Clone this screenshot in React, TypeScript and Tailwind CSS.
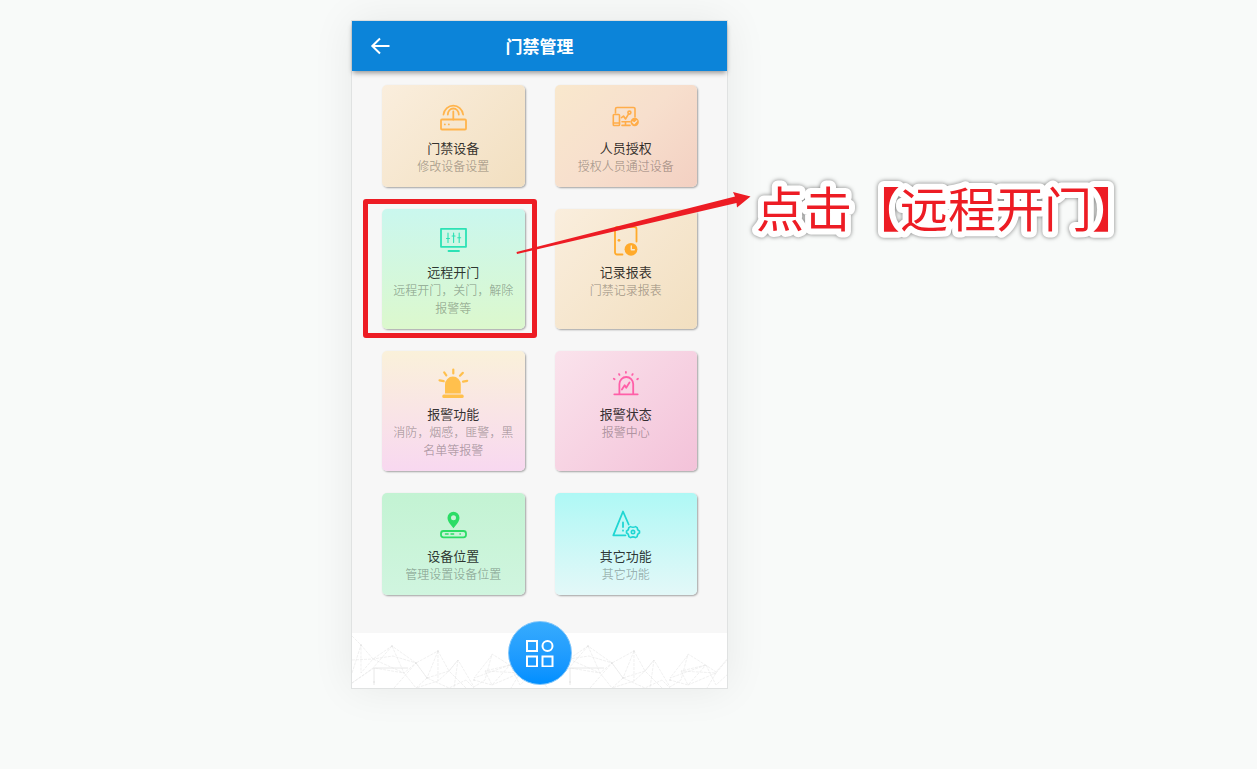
import type { ReactNode } from "react";

type MenuItem = {
  title: string;
  desc: string;
  bg: string;
  color: string;
  icon: ReactNode;
};

const menu: MenuItem[] = [
  {
    title: "门禁设备",
    desc: "修改设备设置",
    bg: "bg-linear-135 from-[#faeedd] to-[#f2dfc0]",
    color: "text-[#ffb44c]",
    icon: (
      <>
        <rect x="4" y="18.5" width="25" height="10" rx="1" />
        <path d="M16.3 10.5v8M6.5 13.5a9.9 10.3 0 0 1 19.6 0M10.8 13.5a5.5 6 0 0 1 11 0" />
        <path d="M7.8 23.4h.1M11.8 23.4h.1" />
      </>
    ),
  },
  {
    title: "人员授权",
    desc: "授权人员通过设备",
    bg: "bg-linear-135 from-[#f9e8cd] via-[#f7dfcd] to-[#f3d0c2]",
    color: "text-[#ffad4a]",
    icon: (
      <g strokeWidth="1.6">
        <path d="M5.5 12V8A1.5 1.5 0 0 1 7 6.500h16.500A1.500 1.500 0 0 1 25 8v8" />
        <rect x="3.3" y="13.5" width="6.2" height="11" rx="0.8" />
        <path d="M3.5 22h6M12 20.700h8M12 24.400h8M15.500 20.700v3.500" />
        <path d="M11.500 16.600l2-1.600 2 3 3-4.800" />
        <circle cx="19.4" cy="11.6" r="1.5" />
        <circle cx="24.7" cy="21" r="4.200" fill="currentColor" stroke="none" />
        <path d="M22.700 21l1.500 1.500 2.500-2.700" stroke="#fbe6d4" strokeWidth="1.2" />
      </g>
    ),
  },
  {
    title: "远程开门",
    desc: "远程开门，关门，解除报警等",
    bg: "bg-linear-to-b from-[#caf7ee] to-[#dcf8cd]",
    color: "text-[#2ce2b5]",
    icon: (
      <>
        <rect x="4" y="3.8" width="25" height="18" />
        <path d="M11.5 26h10.5" />
        <path
          d="M11 8v9.5M16.6 8v9.5M22.2 8v9.5M9.5 13.5h3M15.1 11h3M20.7 12.8h3"
          strokeWidth="1.1"
        />
      </>
    ),
  },
  {
    title: "记录报表",
    desc: "门禁记录报表",
    bg: "bg-linear-135 from-[#faeedd] to-[#f2dfc0]",
    color: "text-[#ffaa2b]",
    icon: (
      <>
        <path d="M12.500 29.500H7a2 2 0 0 1-2-2V4a2 2 0 0 1 2-2h17.500a2 2 0 0 1 2 2v12.500" />
        <circle cx="9" cy="15.3" r="1.4" fill="currentColor" stroke="none" />
        <circle cx="21" cy="24.3" r="6.4" fill="currentColor" stroke="none" />
        <path d="M21.3 21v3.7h3" stroke="#f7e8d0" strokeWidth="1.4" />
      </>
    ),
  },
  {
    title: "报警功能",
    desc: "消防，烟感，匪警，黑名单等报警",
    bg: "bg-linear-to-b from-[#faf1da] to-[#f8d8f0]",
    color: "text-[#ffc04d]",
    icon: (
      <>
        <path d="M8 26.5V17.500a7.900 7.900 0 0 1 15.800 0v9z" fill="currentColor" stroke="none" />
        <rect
          x="5.3"
          y="27.5"
          width="21.4"
          height="3.6"
          rx="1.5"
          fill="currentColor"
          stroke="none"
        />
        <path
          d="M16.300 2.500v4M7.200 5.400l2.100 2.900M25.800 5.900L23 8.700M2.500 13.300l4.200.9M30.200 13.800l-4.200.8"
          strokeWidth="2.2"
        />
      </>
    ),
  },
  {
    title: "报警状态",
    desc: "报警中心",
    bg: "bg-linear-135 from-[#fae3ec] to-[#f3c2d9]",
    color: "text-[#ff5fa8]",
    icon: (
      <>
        <path d="M9.400 27V17a6.900 7 0 0 1 13.800 0v10M4.300 27.300h23.400" />
        <path d="M11.900 22.600l2.800-4.400 1.500 2.500 3.300-5.300" />
        <path d="M15.900 5v.8M9 7.100l.5.800M22.700 7.100l-.5.800M3.800 11.800l.8.500M28 11.800l-.8.500" />
      </>
    ),
  },
  {
    title: "设备位置",
    desc: "管理设置设备位置",
    bg: "bg-linear-to-b from-[#c3f3d3] to-[#d0f5df]",
    color: "text-[#2bdd66]",
    icon: (
      <>
        <path
          d="M16.500 2.800a6 6 0 0 0-6 6c0 4 3.500 7 6 10.400 2.500-3.400 6-6.400 6-10.400a6 6 0 0 0-6-6zm0 3.500a2.500 2.500 0 1 1 0 5 2.500 2.500 0 0 1 0-5z"
          fill="currentColor"
          fillRule="evenodd"
          stroke="none"
        />
        <rect x="4" y="22" width="25" height="6.3" rx="2.5" />
        <path d="M8.500 25.100h2.600M14 25.100h2.600M23 25.100h.3" strokeWidth="1.5" />
      </>
    ),
  },
  {
    title: "其它功能",
    desc: "其它功能",
    bg: "bg-linear-to-b from-[#aef8f5] to-[#e3f8f8]",
    color: "text-[#1fd6d3]",
    icon: (
      <>
        <path d="M15.500 26.300H3.300L13 2.500l5.700 13" />
        <path d="M13 13.500v4.500M13 21.500v.2" />
        <g strokeWidth="1.6">
          <path d="M20.500 17.600q2.500 1.400 5 0l1.700 1q0 2.800 2.300 3.500v2q-2.300.7-2.300 3.500l-1.700 1q-2.500-1.400-5 0l-1.700-1q0-2.800-2.300-3.500v-2q2.300-.7 2.300-3.500z" />
          <circle cx="23" cy="23.1" r="1.7" />
        </g>
      </>
    ),
  },
];

function MenuCard({ item }: { item: MenuItem }) {
  return (
    <button
      type="button"
      className={`flex flex-col items-center rounded-[5px] px-2 pt-4 pb-3 shadow-[1px_1px_2px_rgba(0,0,0,0.35)] ${item.bg}`}
    >
      <svg
        viewBox="0 0 32 32"
        className={`size-8 ${item.color}`}
        fill="none"
        stroke="currentColor"
        strokeWidth="1.8"
        strokeLinecap="round"
        strokeLinejoin="round"
        aria-hidden="true"
      >
        {item.icon}
      </svg>
      <span className="mt-1.5 text-[13px] leading-[18px] text-black/80">{item.title}</span>
      <span className="text-[12px] leading-[18px] text-black/30">{item.desc}</span>
    </button>
  );
}

function FooterMesh() {
  return (
    <svg className="absolute inset-0 size-full" aria-hidden="true">
      <defs>
        <pattern id="mesh" width="196" height="55" patternUnits="userSpaceOnUse">
          <g fill="none" stroke="#e6e6e6" strokeWidth="0.6" strokeDasharray="3 1">
            <path d="M0 3l9 9 12 14 19-13 24 17 22-12 11 20 9-11 16 27 11-7 7-26 16 10 12 8 18-21 10 13" />
            <path d="M0 27l21-1 20-3 23 7 11 15 22-7 17 17M0 40l9-28 0 28 12-14 31 14 12-10-22 25M0 50l22-15 30 5 12 15 11-10 22 10 17-8 8 8" />
            <path d="M40 13l-19 22-21 15M40 13l12 27M86 18l-11 27-11-15M86 18v30M106 27l-9 11-11 10-22 7M106 27l-4 28M140 22l-18 23 36-13-25 6 35 2-28 12 18-20M168 40l18-21-6 22 16-9M133 38l7 14-18-5M158 32l10 20 12-11 16 14M168 40l-9 15" />
          </g>
          <path d="M22 35v17M22 35h34" stroke="#e2e2e2" strokeWidth="0.8" fill="none" />
          <g fill="#dedede">
            <circle cx="9" cy="12" r="0.8" />
            <circle cx="40" cy="13" r="0.8" />
            <circle cx="64" cy="30" r="0.8" />
            <circle cx="86" cy="18" r="0.8" />
            <circle cx="122" cy="47" r="0.8" />
            <circle cx="75" cy="45" r="0.8" />
            <circle cx="22" cy="49" r="0.8" />
          </g>
        </pattern>
      </defs>
      <rect width="100%" height="100%" fill="url(#mesh)" />
    </svg>
  );
}

/* Red frame, arrow and caption laid over the phone */
function Callout() {
  return (
    <div className="pointer-events-none text-[#ed1c24]">
      <div className="absolute top-[178px] left-[11px] h-[139px] w-[174px] rounded-[3px] border-5 border-[#ed1c24]" />
      <svg
        className="absolute top-0 left-0"
        width="800"
        height="240"
        viewBox="0 0 800 240"
        fill="currentColor"
      >
        <path d="M164.500 231L383 175.500l-2-4.500 17.500 4.500L385 186.500l-.5-4.500L165 233z" />
        <text
          x="404"
          y="206"
          fontSize="48"
          stroke="white"
          strokeWidth="12"
          strokeLinejoin="round"
          className="[paint-order:stroke] drop-shadow-[0_0_2px_rgba(0,0,0,0.5)]"
        >
          点击【远程开门】
        </text>
      </svg>
    </div>
  );
}

export default function App() {
  return (
    <div className="min-h-screen overflow-hidden bg-[#f8faf9] pt-5 font-['Noto_Sans_CJK_SC','Liberation_Sans',sans-serif]">
      <div className="relative ml-[351px] w-[377px] border border-[#e0e2e2] bg-[#f7f7f7] shadow-[0_0_40px_rgba(0,0,0,0.07)]">
        <header className="relative flex h-[50px] items-center justify-center bg-[#0c84d9] text-white shadow-[0_3px_5px_-1px_rgba(0,0,0,0.4)]">
          <button type="button" aria-label="返回" className="absolute left-[18px]">
            <svg
              viewBox="0 0 20 20"
              className="size-5"
              fill="none"
              stroke="currentColor"
              strokeWidth="2"
              aria-hidden="true"
            >
              <path d="M10 2.500L2.300 10l7.700 7.500M2.500 10h17" />
            </svg>
          </button>
          <h1 className="text-[17px] font-bold">门禁管理</h1>
        </header>

        <main className="grid grid-cols-2 gap-x-[30px] gap-y-[22px] px-[30px] pt-[14px] pb-[38px]">
          {menu.map((item) => (
            <MenuCard key={item.title} item={item} />
          ))}
        </main>

        <footer className="relative flex h-[55px] justify-center bg-white">
          <FooterMesh />
          <button
            type="button"
            aria-label="菜单"
            className="absolute -top-3 flex size-16 items-center justify-center rounded-full border border-[#7cc4fb] bg-linear-to-b from-[#36abfd] to-[#008fff] text-white"
          >
            <svg
              viewBox="0 0 28 28"
              className="size-7"
              fill="none"
              stroke="currentColor"
              strokeWidth="2"
              aria-hidden="true"
            >
              <rect x="1" y="2" width="10" height="10" />
              <circle cx="21.500" cy="7" r="5" />
              <rect x="1" y="17.500" width="10" height="10" />
              <rect x="16.500" y="17.500" width="10" height="10" />
            </svg>
          </button>
        </footer>

        <Callout />
      </div>
    </div>
  );
}
